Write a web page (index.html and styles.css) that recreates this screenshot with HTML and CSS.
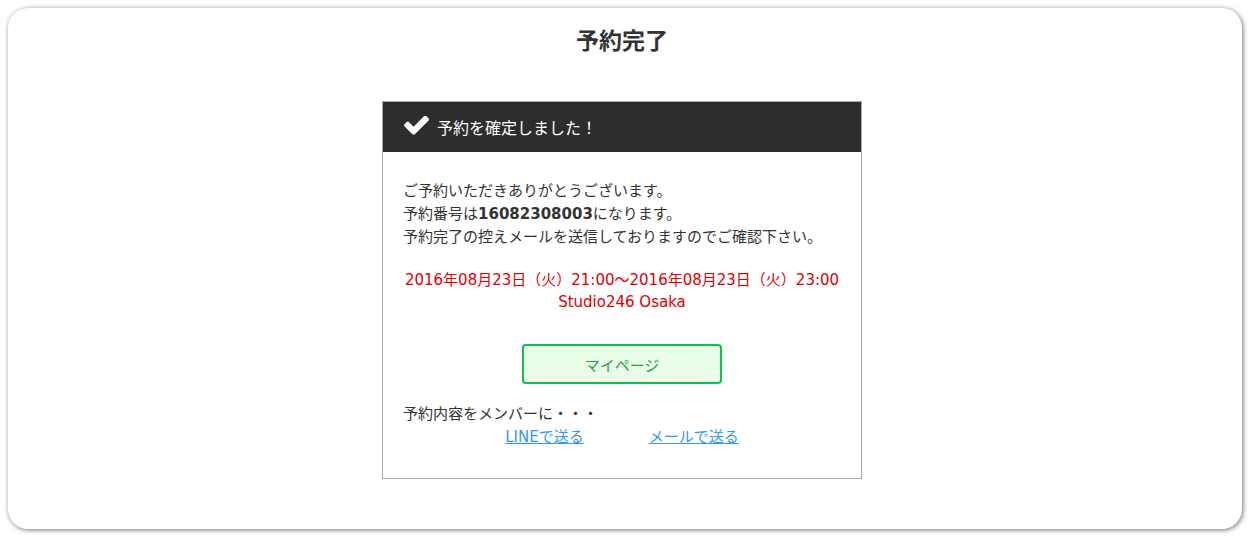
FILE: index.html
```html
<!DOCTYPE html>
<html lang="ja">
<head>
<meta charset="utf-8">
<title>予約完了</title>
<link rel="stylesheet" href="styles.css">
</head>
<body>
<div class="card">
  <h1 class="title">予約完了</h1>
  <div class="box">
    <div class="box-head">
      <svg class="check" viewBox="121 362 1550 1164" width="25" height="19" aria-hidden="true"><path fill="#fff" d="M1671 566q0 40-28 68l-724 724-136 136q-28 28-68 28t-68-28l-136-136-362-362q-28-28-28-68t28-68l136-136q28-28 68-28t68 28l294 295 656-657q28-28 68-28t68 28l136 136q28 28 28 68z"/></svg>
      <span>予約を確定しました！</span>
    </div>
    <div class="box-body">
      <p class="msg">ご予約いただきありがとうございます。<br>予約番号は<b>16082308003</b>になります。<br>予約完了の控えメールを送信しておりますのでご確認下さい。</p>
      <p class="when">2016年08月23日（火）21:00〜2016年08月23日（火）23:00<br>Studio246 Osaka</p>
      <div class="btn-row"><a class="btn" href="#">マイページ</a></div>
      <p class="share">予約内容をメンバーに・・・</p>
      <div class="links"><a href="#">LINEで送る</a><a href="#">メールで送る</a></div>
    </div>
  </div>
</div>
</body>
</html>
```
FILE: styles.css
```css
html, body {
  margin: 0;
  padding: 0;
  background: #fff;
}
body {
  padding: 8px;
  font-family: "DejaVu Sans", "Noto Sans CJK JP", sans-serif;
  color: #333;
}
.card {
  box-sizing: border-box;
  height: 521px;
  border-radius: 20px;
  background: #fff;
  box-shadow: 1px 1px 5px rgba(0,0,0,0.55);
  padding: 16px 6px 0 0;
}
.title {
  margin: 0;
  text-align: center;
  font-size: 23px;
  line-height: 34px;
  font-weight: bold;
  color: #333;
}
.box {
  width: 478px;
  margin: 43px auto 0;
  border: 1px solid #aaa;
}
.box-head {
  background: #2d2d2d;
  color: #fff;
  height: 50px;
  display: flex;
  align-items: center;
  padding-left: 21px;
  gap: 8px;
  font-size: 16px;
}
.check {
  display: block;
  margin-top: -4px;
}
.box-body {
  padding: 28px 20px 29px;
  font-size: 15px;
}
.msg {
  margin: 0;
  line-height: 23px;
}
.msg b {
  font-weight: bold;
}
.when {
  margin: 20px 0 0;
  text-align: center;
  color: #dd0000;
  line-height: 22px;
  font-size: 15px;
}
.btn-row {
  display: flex;
  justify-content: center;
  margin-top: 31px;
}
.btn {
  box-sizing: border-box;
  width: 200px;
  height: 40px;
  border: 2px solid #12c050;
  border-radius: 4px;
  background: #eafde9;
  color: #1aa84a;
  text-decoration: none;
  display: flex;
  align-items: center;
  justify-content: center;
}
.share {
  margin: 19px 0 0;
  line-height: 23px;
}
.links {
  display: flex;
  justify-content: center;
  gap: 65px;
  line-height: 23px;
}
.links a {
  color: #3399ee;
  text-decoration: underline;
}
```
